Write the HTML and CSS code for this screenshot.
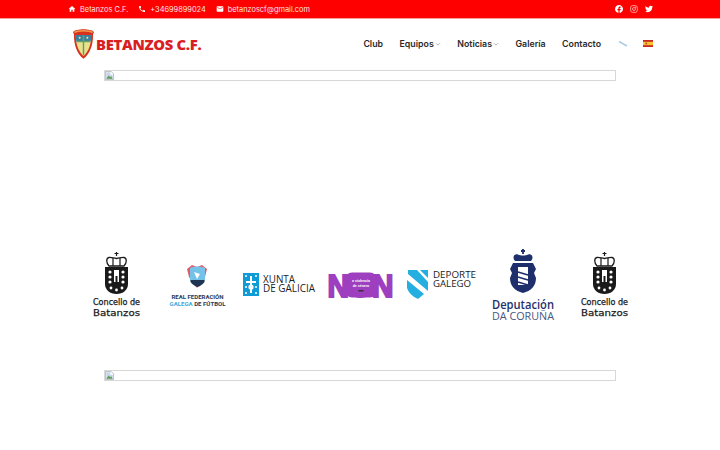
FILE: index.html
```html
<!DOCTYPE html>
<html lang="es">
<head>
<meta charset="utf-8">
<title>Betanzos C.F.</title>
<link rel="stylesheet" href="styles.css">
</head>
<body>
<div class="topbar">
  <div class="contact">
    <span class="contact-item">
      <svg class="ti" viewBox="0 0 24 24"><path d="M10 20v-6h4v6h5v-8h3L12 3 2 12h3v8z"/></svg>
      Betanzos C.F.
    </span>
    <span class="contact-item">
      <svg class="ti" viewBox="0 0 24 24"><path d="M6.620 10.790c1.440 2.830 3.760 5.140 6.590 6.590l2.200-2.200c.27-.27.67-.36 1.020-.24 1.120.37 2.330.57 3.570.57.55 0 1 .45 1 1V20c0 .55-.45 1-1 1-9.390 0-17-7.610-17-17 0-.55.45-1 1-1h3.500c.55 0 1 .45 1 1 0 1.250.2 2.450.57 3.570.11.35.03.74-.25 1.020l-2.200 2.200z"/></svg>
      +34699899024
    </span>
    <span class="contact-item">
      <svg class="ti" viewBox="0 0 24 24"><path d="M20 4H4c-1.100 0-2 .9-2 2v12c0 1.100.9 2 2 2h16c1.100 0 2-.9 2-2V6c0-1.100-.9-2-2-2zm0 4l-8 5-8-5V6l8 5 8-5v2z"/></svg>
      betanzoscf@gmail.com
    </span>
  </div>
  <div class="social">
    <svg class="si" viewBox="0 0 24 24"><path d="M24 12.073c0-6.627-5.373-12-12-12s-12 5.373-12 12c0 5.990 4.388 10.954 10.125 11.854v-8.385H7.078v-3.470h3.047V9.430c0-3.007 1.792-4.669 4.533-4.669 1.312 0 2.686.235 2.686.235v2.953H15.830c-1.491 0-1.956.925-1.956 1.874v2.250h3.328l-.532 3.470h-2.796v8.385C19.612 23.027 24 18.062 24 12.073z"/></svg>
    <svg class="si ig" viewBox="0 0 24 24"><rect x="2" y="2" width="20" height="20" rx="6"/><circle cx="12" cy="12" r="4.500"/><circle cx="17.500" cy="6.500" r=".8"/></svg>
    <svg class="si" viewBox="0 0 24 24"><path d="M23.953 4.570a10 10 0 01-2.825.775 4.958 4.958 0 002.163-2.723c-.951.555-2.005.959-3.127 1.184a4.920 4.920 0 00-8.384 4.482C7.690 8.095 4.067 6.130 1.640 3.162a4.822 4.822 0 00-.666 2.475c0 1.710.870 3.213 2.188 4.096a4.904 4.904 0 01-2.228-.616v.060a4.923 4.923 0 003.946 4.827 4.996 4.996 0 01-2.212.085 4.936 4.936 0 004.604 3.417 9.867 9.867 0 01-6.102 2.105c-.39 0-.779-.023-1.170-.067a13.995 13.995 0 007.557 2.209c9.053 0 13.998-7.496 13.998-13.985 0-.21 0-.42-.015-.63A9.935 9.935 0 0024 4.590z"/></svg>
  </div>
</div>

<header class="header">
  <div class="brand">
    <svg class="crest" viewBox="0 0 24 34">
      <path d="M1 5C4 1 20 1 23 5l-1 2c0 12-3 20-10 26C5 27 2 19 2 7z" fill="#d8321f"/>
      <path d="M2.500 5.500C6 3 18 3 21.500 5.500" fill="none" stroke="#f2994a" stroke-width="1.500"/>
      <path d="M4 8h16c0 10-2.500 17-8 22C6.500 25 4 18 4 8z" fill="#e8e28c"/>
      <path d="M4 8h16c0 3-.2 5-.6 7H4.600C4.200 13 4 11 4 8z" fill="#3b7f9f"/>
      <path d="M12 8v21M5 15h14" stroke="#5f9f6a" stroke-width="1.500"/>
      <circle cx="8" cy="11" r="1" fill="#f4e9a0"/><circle cx="16" cy="11" r="1" fill="#f4e9a0"/>
    </svg>
    <span class="brand-name">BETANZOS C.F.</span>
  </div>
  <nav class="nav">
    <a class="nav-link">Club</a>
    <a class="nav-link">Equipos<svg class="caret" viewBox="0 0 8 8"><path d="M1.500 3l2.500 2.500L6.500 3"/></svg></a>
    <a class="nav-link">Noticias<svg class="caret" viewBox="0 0 8 8"><path d="M1.500 3l2.500 2.500L6.500 3"/></svg></a>
    <a class="nav-link">Galería</a>
    <a class="nav-link">Contacto</a>
    <svg class="flag flag-gl" viewBox="0 0 10 7"><path d="M1 1.500L9 6" stroke="#a9cde6" stroke-width="1.500"/></svg>
    <svg class="flag flag-es" viewBox="0 0 10 7"><rect width="10" height="7" fill="#c8281e"/><rect y="1.800" width="10" height="3.400" fill="#f6c331"/><rect x="2.500" y="2.600" width="1.600" height="1.800" fill="#b5502a"/></svg>
  </nav>
</header>

<div class="broken">
  <svg class="broken-icon" viewBox="0 0 11 11"><path d="M.5.5h7l3 3v7H.5z" fill="#fff" stroke="#a8b0b8"/><path d="M1.500 1.500h5v3h3v5h-8z" fill="#c5d6ee"/><path d="M1.500 9.500l3-4 2 2 1-1 2 3z" fill="#5d9c4f"/></svg>
</div>

<section class="logos">
  <div class="logo">
    <svg class="logo-svg" viewBox="0 0 81 80">
      <path d="M40.500 7v4M38.500 8.500h4" class="stroke-dark"/>
      <path d="M33 21c-3-3-3-8 0-8.500 2-.3 4 .5 7.500 1 3.500-.5 5.500-1.300 7.500-1 3 .5 3 5.500 0 8.500z" class="crown"/>
      <path d="M37 13v8M44 13v8" class="stroke-dark"/>
      <path d="M29 22h23v17c0 6-5 10-11.500 10S29 45 29 39z" fill="#1a1a1a"/>
      <g fill="#fff">
        <circle cx="34" cy="27" r="1.600"/><circle cx="34" cy="32" r="1.600"/><circle cx="34" cy="37" r="1.600"/>
        <circle cx="47" cy="27" r="1.600"/><circle cx="47" cy="32" r="1.600"/><circle cx="47" cy="37" r="1.600"/>
        <path d="M38 25h5v12h-5z"/>
        <circle cx="35" cy="43" r="1.400"/><circle cx="40.500" cy="45" r="1.400"/><circle cx="46" cy="43" r="1.400"/>
      </g>
      <path d="M39.500 31h2v6h-2z" fill="#1a1a1a"/>
      <text x="17" y="60" textLength="47" lengthAdjust="spacingAndGlyphs" class="t-concello">Concello de</text>
      <text x="17" y="70.500" textLength="47" lengthAdjust="spacingAndGlyphs" class="t-batanzos">Batanzos</text>
    </svg>
  </div>
  <div class="logo">
    <svg class="logo-svg" viewBox="0 0 81 80">
      <path d="M30 24l5-4 5 2 5-2 5 4-2 8-8 11-8-11z" fill="#e35b6b"/>
      <path d="M33 23c3-2 12-2 15 0v11c0 3-3 5-7.500 6-4.500-1-7.500-3-7.500-6z" fill="#75c2e8"/>
      <path d="M33.500 35h14v2c-2 2.500-4 4-7 5-3-1-5-2.500-7-5z" fill="#1f3352"/>
      <path d="M37 27l6 2-3 5z" fill="#fff"/>
      <text x="40.500" y="54" text-anchor="middle" textLength="52" lengthAdjust="spacingAndGlyphs" class="t-rf navy">REAL FEDERACIÓN</text>
      <text x="40.500" y="61" text-anchor="middle" textLength="56" lengthAdjust="spacingAndGlyphs" class="t-rf navy"><tspan class="sky">GALEGA</tspan> DE FÚTBOL</text>
    </svg>
  </div>
  <div class="logo">
    <svg class="logo-svg" viewBox="0 0 81 80">
      <rect x="4" y="28" width="16" height="23" fill="#0f9bd7"/>
      <g fill="#fff"><path d="M11 31h2v17h-2z"/><path d="M7 36h10v2H7z"/><circle cx="12" cy="42" r="2.600"/><circle cx="7" cy="31" r="1"/><circle cx="17" cy="31" r="1"/><circle cx="7" cy="48" r="1"/><circle cx="17" cy="48" r="1"/><circle cx="7" cy="42" r="1"/><circle cx="17" cy="42" r="1"/></g>
      <text x="24" y="38" textLength="32" lengthAdjust="spacingAndGlyphs" class="t-xunta">XUNTA</text>
      <text x="24" y="47" textLength="52" lengthAdjust="spacingAndGlyphs" class="t-xunta">DE GALICIA</text>
    </svg>
  </div>
  <div class="logo">
    <svg class="logo-svg" viewBox="0 0 81 80">
      <text x="7.500" y="51.500" textLength="66" lengthAdjust="spacingAndGlyphs" class="t-non">NON</text>
      <rect x="25" y="27.500" width="32" height="25" rx="7" fill="#9d3fbe"/>
      <text x="41" y="37" text-anchor="middle" class="t-non-small">a violencia</text>
      <text x="41" y="42" text-anchor="middle" class="t-non-small">de xénero</text>
      <rect x="38.500" y="45" width="5" height="1.500" fill="#333"/>
    </svg>
  </div>
  <div class="logo">
    <svg class="logo-svg" viewBox="0 0 81 80">
      <path d="M7 25h9l11 12v9L7 29z" fill="#25aee0"/>
      <path d="M19 25h8v8z" fill="#25aee0"/>
      <path d="M6 35l17 14-6 5Q8 50 6 43z" fill="#25aee0"/>
      <text x="32" y="33" textLength="43" lengthAdjust="spacingAndGlyphs" class="t-dep">DEPORTE</text>
      <text x="32" y="41.500" textLength="38" lengthAdjust="spacingAndGlyphs" class="t-dep">GALEGO</text>
    </svg>
  </div>
  <div class="logo">
    <svg class="logo-svg" viewBox="0 0 81 80">
      <path d="M40 4v5M38 6h4" stroke="#1f2f6b" stroke-width="1.800"/>
      <path d="M32 16c-4-5 1-8 4-6 2 .5 3 .5 4 .5s2 0 4-.5c3-2 8 1 4 6z" fill="#1f2f6b"/>
      <path d="M30 18h20l3 6-2 4 2 5c0 8-5 13-13 15-8-2-13-7-13-15l2-5-2-4z" fill="#1f2f6b"/>
      <path d="M35 22h10v18h-10z" fill="#fff"/>
      <path d="M35 27l10 3M35 32l10 3M35 37l10 3" stroke="#1f2f6b" stroke-width="1.500"/>
      <text x="40" y="64" text-anchor="middle" textLength="62" lengthAdjust="spacingAndGlyphs" class="t-dip-a">Deputación</text>
      <text x="40" y="75" text-anchor="middle" textLength="62" lengthAdjust="spacingAndGlyphs" class="t-dip-b">DA CORUÑA</text>
    </svg>
  </div>
  <div class="logo">
    <svg class="logo-svg" viewBox="0 0 81 80">
      <path d="M40.500 7v4M38.500 8.500h4" class="stroke-dark"/>
      <path d="M33 21c-3-3-3-8 0-8.500 2-.3 4 .5 7.500 1 3.500-.5 5.500-1.300 7.500-1 3 .5 3 5.500 0 8.500z" class="crown"/>
      <path d="M37 13v8M44 13v8" class="stroke-dark"/>
      <path d="M29 22h23v17c0 6-5 10-11.500 10S29 45 29 39z" fill="#1a1a1a"/>
      <g fill="#fff">
        <circle cx="34" cy="27" r="1.600"/><circle cx="34" cy="32" r="1.600"/><circle cx="34" cy="37" r="1.600"/>
        <circle cx="47" cy="27" r="1.600"/><circle cx="47" cy="32" r="1.600"/><circle cx="47" cy="37" r="1.600"/>
        <path d="M38 25h5v12h-5z"/>
        <circle cx="35" cy="43" r="1.400"/><circle cx="40.500" cy="45" r="1.400"/><circle cx="46" cy="43" r="1.400"/>
      </g>
      <path d="M39.500 31h2v6h-2z" fill="#1a1a1a"/>
      <text x="17" y="60" textLength="47" lengthAdjust="spacingAndGlyphs" class="t-concello">Concello de</text>
      <text x="17" y="70.500" textLength="47" lengthAdjust="spacingAndGlyphs" class="t-batanzos">Batanzos</text>
    </svg>
  </div>
</section>

<div class="broken">
  <svg class="broken-icon" viewBox="0 0 11 11"><path d="M.5.5h7l3 3v7H.5z" fill="#fff" stroke="#a8b0b8"/><path d="M1.500 1.500h5v3h3v5h-8z" fill="#c5d6ee"/><path d="M1.500 9.500l3-4 2 2 1-1 2 3z" fill="#5d9c4f"/></svg>
</div>
</body>
</html>
```

FILE: styles.css
```css
* { box-sizing: border-box; }
html, body { margin: 0; padding: 0; background: #fff; overflow: hidden; }
body { font-family: "Inter", "Liberation Sans", sans-serif; color: #222; }

.topbar {
  height: 19px;
  background: #fe0000;
  border-bottom: 1px solid #f8a0a0;
  padding: 0 67px 0 68px;
  display: flex;
  align-items: center;
  justify-content: space-between;
  color: #ffe3e3;
  font-size: 7.400px;
}
.contact { display: flex; gap: 10px; }
.contact-item { display: flex; align-items: center; gap: 4px; white-space: nowrap; }
.ti { width: 8px; height: 8px; fill: #fff; }
.social { display: flex; gap: 7px; }
.si { width: 8px; height: 8px; fill: #fff; }
.si.ig { fill: none; stroke: #ffe3e3; stroke-width: 2; }

.header {
  height: 51px;
  padding: 0 67px 2px 72px;
  display: flex;
  align-items: center;
  justify-content: space-between;
}
.brand { display: flex; align-items: center; gap: 1px; }
.crest { width: 23px; height: 33px; }
.brand-name {
  font-family: "Open Sans", "Liberation Sans", sans-serif;
  font-weight: 800;
  font-size: 14.800px;
  letter-spacing: -.3px;
  color: #d9201f;
  white-space: nowrap;
}
.nav { display: flex; align-items: center; }
.nav-link {
  display: flex;
  align-items: center;
  font-size: 8.800px;
  font-weight: 600;
  color: #2a2a2a;
  margin-right: 16.500px;
  white-space: nowrap;
}
.nav-link:nth-child(5) { margin-right: 17px; }
.caret { width: 6px; height: 6px; margin-left: 1px; fill: none; stroke: #999; stroke-width: 1; }
.flag { width: 10px; height: 7px; }
.flag-gl { margin-right: 15px; }

.broken {
  width: 512px;
  height: 11px;
  margin: 0 0 0 104px;
  border: 1px solid #d8d8d8;
  display: flex;
}
.broken-icon { width: 9px; height: 9px; flex: none; }

.logos {
  width: 569px;
  height: 289px;
  margin-left: 76px;
  padding-top: 164px;
  display: grid;
  grid-template-columns: repeat(7, 1fr);
  align-items: start;
}
.logo { display: flex; justify-content: center; }
.logo-svg { width: 81px; height: 80px; display: block; overflow: visible; }

.crown { fill: #fff; stroke: #1a1a1a; stroke-width: 1.300; }
.stroke-dark { stroke: #1a1a1a; stroke-width: 1.200; fill: none; }
.t-concello, .t-batanzos { font-family: "DejaVu Sans", sans-serif; font-size: 8px; fill: #1a1a1a; stroke: #1a1a1a; stroke-width: .25; }
.t-batanzos { font-size: 9.500px; }
.t-rf { font-family: "Roboto", sans-serif; font-weight: 700; font-size: 6px; }
.navy { fill: #2d3a55; }
.sky { fill: #3fa9dd; }
.t-xunta { font-family: "Open Sans", sans-serif; font-size: 11px; fill: #222; }
.t-non { font-family: "Liberation Sans", sans-serif; font-weight: 700; font-size: 32px; fill: #9d3fbe; stroke: #9d3fbe; stroke-width: 2; }
.t-non-small { font-family: "Liberation Sans", sans-serif; font-size: 3.500px; font-weight: 700; fill: #fff; }
.t-dep { font-family: "Open Sans", sans-serif; font-size: 9.500px; fill: #222; }
.t-dip-a { font-family: "Open Sans", sans-serif; font-weight: 600; font-size: 12px; fill: #1f2f6b; }
.t-dip-b { font-family: "Open Sans", sans-serif; font-size: 11.500px; fill: #4a5680; }
```
